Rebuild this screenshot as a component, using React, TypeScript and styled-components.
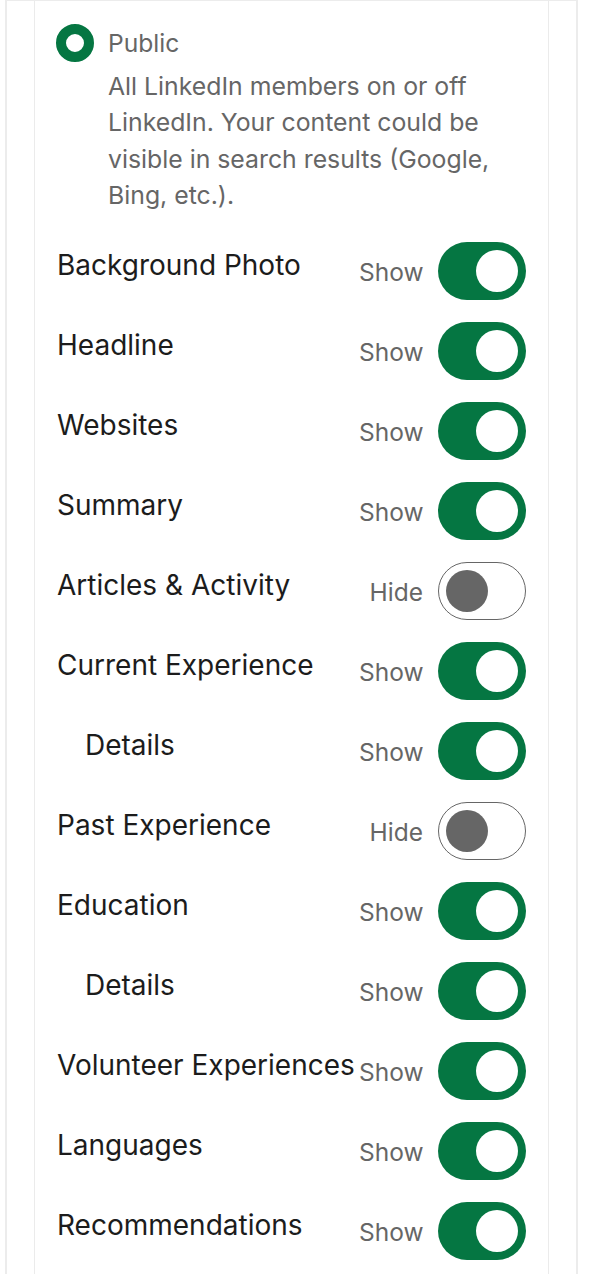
import React from "react";
import styled, { createGlobalStyle } from "styled-components";

const GlobalStyle = createGlobalStyle`
  html, body { margin: 0; padding: 0; background: #ffffff; }
  body { font-family: Inter, "Noto Sans", "Liberation Sans", sans-serif; -webkit-font-smoothing: antialiased; }
  * { box-sizing: border-box; }
`;

const Frame = styled.div`
  margin-left: 5px;
  width: 573px;
  min-height: 1274px;
  border-top: 1px solid #ececec;
  border-left: 2px solid #ececec;
  border-right: 2px solid #ececec;
`;

const Card = styled.div`
  margin-left: 27px;
  width: 515px;
  min-height: 1273px;
  border-left: 1px solid #ebebeb;
  border-right: 1px solid #ebebeb;
  padding: 22px 22px 0 21px;
`;

const OptionRow = styled.div`
  display: flex;
  align-items: center;
  gap: 14px;
`;

const Radio = styled.span`
  width: 38px;
  height: 38px;
  border-radius: 50%;
  border: 10.5px solid #057642;
  background: #fff;
  flex: none;
`;

const OptionTitle = styled.span`
  font-size: 24.6px;
  line-height: 40px;
  color: #666666;
`;

const Description = styled.p`
  margin: 5px 0 0 52px;
  font-size: 24.8px;
  line-height: 36.4px;
  color: #666666;
  max-width: 410px;
`;

const List = styled.div`
  margin-top: 18px;
  display: flex;
  flex-direction: column;
`;

const Row = styled.div<{ $indent?: boolean }>`
  height: 80px;
  display: flex;
  align-items: flex-start;
  justify-content: space-between;
  padding-left: ${(p) => (p.$indent ? "29px" : "1px")};
`;

const Label = styled.span`
  font-size: 28px;
  line-height: 36px;
  color: #1c1c1c;
  padding-top: 15px;
  white-space: nowrap;
`;

const Control = styled.div`
  display: flex;
  align-items: center;
  gap: 15px;
  padding-top: 10px;
  flex: none;
`;

const State = styled.span`
  font-size: 24.5px;
  color: #666666;
  width: 64px;
  text-align: right;
  padding-top: 3px;
`;

const Switch = styled.span<{ $on: boolean }>`
  width: 88px;
  height: 58px;
  border-radius: 29px;
  display: flex;
  align-items: center;
  justify-content: ${(p) => (p.$on ? "flex-end" : "flex-start")};
  background: ${(p) => (p.$on ? "#057642" : "#ffffff")};
  border: ${(p) => (p.$on ? "none" : "1px solid #666666")};
  padding: ${(p) => (p.$on ? "0 8px" : "0 7px")};
`;

const Knob = styled.span<{ $on: boolean }>`
  width: 42px;
  height: 42px;
  border-radius: 50%;
  background: ${(p) => (p.$on ? "#ffffff" : "#666666")};
`;

const items: { label: string; on: boolean; indent?: boolean }[] = [
  { label: "Background Photo", on: true },
  { label: "Headline", on: true },
  { label: "Websites", on: true },
  { label: "Summary", on: true },
  { label: "Articles & Activity", on: false },
  { label: "Current Experience", on: true },
  { label: "Details", on: true, indent: true },
  { label: "Past Experience", on: false },
  { label: "Education", on: true },
  { label: "Details", on: true, indent: true },
  { label: "Volunteer Experiences", on: true },
  { label: "Languages", on: true },
  { label: "Recommendations", on: true },
];

export default function App() {
  return (
    <>
      <GlobalStyle />
      <Frame>
        <Card>
          <OptionRow>
            <Radio />
            <OptionTitle>Public</OptionTitle>
          </OptionRow>
          <Description>
            All LinkedIn members on or off LinkedIn. Your content could be visible in search results (Google, Bing, etc.).
          </Description>
          <List>
            {items.map((it, i) => (
              <Row key={i} $indent={it.indent}>
                <Label>{it.label}</Label>
                <Control>
                  <State>{it.on ? "Show" : "Hide"}</State>
                  <Switch $on={it.on}>
                    <Knob $on={it.on} />
                  </Switch>
                </Control>
              </Row>
            ))}
          </List>
        </Card>
      </Frame>
    </>
  );
}
